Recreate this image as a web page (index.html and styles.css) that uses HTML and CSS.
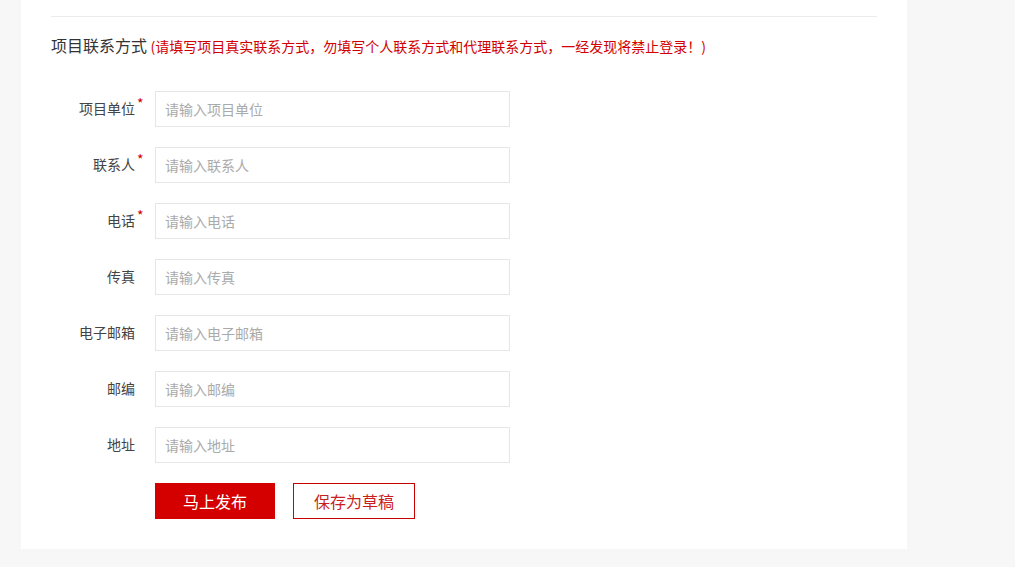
FILE: index.html
```html
<!DOCTYPE html>
<html lang="zh-CN">
<head>
    <meta charset="UTF-8">
    <title>项目联系方式</title>
    <link rel="stylesheet" href="styles.css">
</head>
<body>
    <div class="panel">
        <div class="divider"></div>
        <h2 class="section-title">项目联系方式 <span class="section-tip">(请填写项目真实联系方式，勿填写个人联系方式和代理联系方式，一经发现将禁止登录！)</span></h2>

        <form class="contact-form">
            <div class="form-row">
                <label class="form-label required">项目单位</label>
                <input class="form-input" type="text" placeholder="请输入项目单位">
            </div>
            <div class="form-row">
                <label class="form-label required">联系人</label>
                <input class="form-input" type="text" placeholder="请输入联系人">
            </div>
            <div class="form-row">
                <label class="form-label required">电话</label>
                <input class="form-input" type="text" placeholder="请输入电话">
            </div>
            <div class="form-row">
                <label class="form-label">传真</label>
                <input class="form-input" type="text" placeholder="请输入传真">
            </div>
            <div class="form-row">
                <label class="form-label">电子邮箱</label>
                <input class="form-input" type="text" placeholder="请输入电子邮箱">
            </div>
            <div class="form-row">
                <label class="form-label">邮编</label>
                <input class="form-input" type="text" placeholder="请输入邮编">
            </div>
            <div class="form-row">
                <label class="form-label">地址</label>
                <input class="form-input" type="text" placeholder="请输入地址">
            </div>
            <div class="form-actions">
                <button type="button" class="btn btn-primary">马上发布</button>
                <button type="button" class="btn btn-outline">保存为草稿</button>
            </div>
        </form>
    </div>
</body>
</html>
```

FILE: styles.css
```css
body {
    margin: 0;
    background-color: #f7f7f7;
    font-family: "Microsoft YaHei", "Noto Sans CJK SC", sans-serif;
    color: #333;
}

.panel {
    width: 826px;
    margin-left: 21px;
    padding: 16px 30px 30px;
    background: #fff;
}

.divider {
    height: 1px;
    background: #ececec;
}

.section-title {
    margin: 16px 0 0;
    font-size: 16px;
    font-weight: normal;
    line-height: 24px;
    color: #333;
}

.section-tip {
    font-size: 14px;
    color: #d20000;
}

.contact-form {
    margin-top: 33px;
}

.form-row {
    display: flex;
    align-items: center;
    margin-bottom: 20px;
}

.form-label {
    position: relative;
    width: 84px;
    margin-right: 20px;
    margin-top: -3px;
    text-align: right;
    font-size: 14px;
    color: #444;
}

.form-label.required::after {
    content: '*';
    position: absolute;
    left: 100%;
    top: -5px;
    margin-left: 2px;
    color: #d20000;
    font-size: 14px;
}

.form-input {
    box-sizing: border-box;
    width: 355px;
    height: 36px;
    padding: 0 9px;
    border: 1px solid #e6e6e6;
    outline: none;
    font-family: inherit;
    font-size: 14px;
    color: #333;
}

.form-input::placeholder {
    color: #aaa;
}

.form-actions {
    display: flex;
    gap: 18px;
    padding-left: 104px;
}

.btn {
    box-sizing: border-box;
    height: 36px;
    font-family: inherit;
    font-size: 16px;
    cursor: pointer;
}

.btn-primary {
    width: 120px;
    border: none;
    background: #d40000;
    color: #fff;
}

.btn-outline {
    width: 122px;
    border: 1px solid #c80000;
    background: #fff;
    color: #c81e1e;
}
```
